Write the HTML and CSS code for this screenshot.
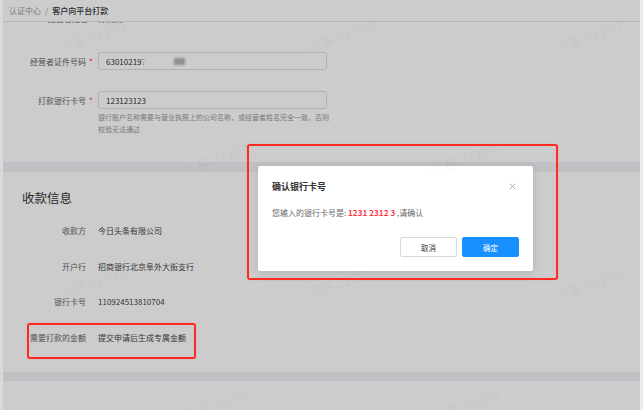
FILE: index.html
```html
<!DOCTYPE html>
<html lang="zh-CN">
<head>
  <meta charset="UTF-8" />
  <meta name="viewport" content="width=device-width, initial-scale=1.0"/>
  <title>客户向平台打款</title>
  <link rel="stylesheet" href="styles.css">
</head>
<body>
  <div class="app">
    <div class="edge edge-left"></div>

    <div class="page">
      <div class="crumb">
        <span class="crumb-link">认证中心</span>
        <span class="crumb-sep">/</span>
        <span class="crumb-current">客户向平台打款</span>
      </div>

      <div class="card form-card">
        <div class="form-row cut">
          <div class="form-label">经营者姓名</div>
          <div class="cut-value">孙某某</div>
        </div>

        <div class="form-row first">
          <div class="form-label">经营者证件号码<span class="req">*</span></div>
          <div class="input">
            <span>630102197</span>
            <span class="blur blur-a"></span>
            <span class="blur blur-b"></span>
          </div>
        </div>

        <div class="form-row">
          <div class="form-label">打款银行卡号<span class="req">*</span></div>
          <div class="input"><span>123123123</span></div>
        </div>
        <p class="hint">银行账户名称需要与营业执照上的公司名称，或经营者姓名完全一致，否则校验无法通过</p>
      </div>

      <div class="band"></div>

      <div class="card pay-card">
        <h2>收款信息</h2>
        <div class="info-list">
          <div class="info-row"><span class="info-label">收款方</span><span class="info-value">今日头条有限公司</span></div>
          <div class="info-row"><span class="info-label">开户行</span><span class="info-value">招商银行北京阜外大街支行</span></div>
          <div class="info-row"><span class="info-label">银行卡号</span><span class="info-value">110924513810704</span></div>
          <div class="info-row"><span class="info-label">需要打款的金额</span><span class="info-value">提交申请后生成专属金额</span></div>
        </div>
      </div>

      <div class="band band-thin"></div>
      <div class="card tail-card"></div>

      <!-- modal layer -->
      <div class="mask"></div>

      <div class="modal">
        <div class="modal-head">
          <span class="modal-title">确认银行卡号</span>
          <svg class="modal-close" viewBox="0 0 8 8" width="7" height="7">
            <path d="M1 1L7 7M7 1L1 7" stroke="#999" stroke-width="0.9" fill="none"/>
          </svg>
        </div>
        <p class="modal-body">您输入的银行卡号是: <b class="card-no">1231 2312 3</b> ,请确认</p>
        <div class="modal-foot">
          <button class="btn">取消</button>
          <button class="btn btn-primary">确定</button>
        </div>
      </div>

      <!-- annotations -->
      <div class="mark mark-modal"></div>
      <div class="mark mark-amount"></div>

      <!-- watermark -->
      <div class="wm" style="left:89px;top:36px">访客 22293</div>
      <div class="wm" style="left:337px;top:35px">访客 22293</div>
      <div class="wm" style="left:585px;top:37px">访客 22293</div>
      <div class="wm" style="left:-36px;top:159px">访客 22293</div>
      <div class="wm" style="left:212px;top:159px">访客 22293</div>
      <div class="wm" style="left:460px;top:159px">访客 22293</div>
      <div class="wm" style="left:89px;top:282px">访客 22293</div>
      <div class="wm" style="left:337px;top:282px">访客 22293</div>
      <div class="wm" style="left:586px;top:285px">访客 22293</div>
      <div class="wm" style="left:-36px;top:405px">访客 22293</div>
      <div class="wm" style="left:214px;top:403px">访客 22293</div>
      <div class="wm" style="left:463px;top:405px">访客 22293</div>
    </div>

    <div class="edge edge-right"></div>
  </div>
</body>
</html>
```

FILE: styles.css
```css
:root {
  --text: #333;
  --label: #666;
  --muted: #999;
  --line: #e3e3e3;
  --band: #f0f2f5;
  --red: #f5222d;
  --blue: #1890ff;
  --mark: #ff2b22;
}

* {
  box-sizing: border-box;
}

body {
  margin: 0;
  font-family: "Noto Sans CJK SC", "Noto Sans", sans-serif;
  color: var(--text);
  background: #fff;
}

.app {
  display: flex;
  width: 643px;
  height: 410px;
  overflow: hidden;
}

.edge-left {
  width: 3px;
  background: #d9d9d9;
}

.edge-right {
  width: 3px;
  background: #ececec;
}

.page {
  position: relative;
  flex: 1;
  display: flex;
  flex-direction: column;
  overflow: hidden;
  background: #fff;
}

/* header */
.crumb {
  position: relative;
  z-index: 1;
  flex: none;
  height: 22px;
  display: flex;
  align-items: center;
  gap: 3px;
  padding: 0 6px 1px;
  font-size: 8px;
  background: #fff;
  border-bottom: 1px solid var(--line);
}

.crumb-link {
  color: var(--muted);
}

.crumb-sep {
  color: var(--muted);
  margin: 0 1px;
}

.crumb-current {
  color: var(--text);
  font-weight: 500;
}

/* form */
.card {
  background: #fff;
}

.form-card {
  flex: none;
  height: 140px;
  overflow: hidden;
}

.form-row {
  display: grid;
  grid-template-columns: 95px 229px;
  align-items: center;
}

.form-row + .form-row {
  margin-top: 21px;
}

.form-row.first {
  margin-top: 29px;
}

.form-row.cut {
  height: 8px;
  margin-top: -7px;
  font-size: 8px;
  line-height: 8px;
}

.cut-value {
  color: var(--label);
}

.form-label {
  display: flex;
  justify-content: flex-end;
  align-items: center;
  padding-right: 5px;
  font-size: 8px;
  color: var(--label);
}

.form-row.cut .form-label {
  padding-right: 10px;
}

.req {
  color: var(--red);
  margin-left: 3px;
  width: 4px;
  font-size: 8px;
  line-height: 8px;
  padding-top: 2px;
}

.input {
  height: 18px;
  display: flex;
  align-items: center;
  padding-left: 7px;
  font-size: 8px;
  color: var(--text);
  border: 1px solid #dedede;
  border-radius: 3px;
  background: #fff;
}

.blur {
  display: inline-block;
  height: 7px;
  filter: blur(1px);
}

.blur-a {
  width: 18px;
  margin-left: -3px;
  background: #fff;
}

.blur-b {
  width: 11px;
  margin-left: 13px;
  background: #b5b5b5;
}

.hint {
  margin: 2px 0 0 95px;
  width: 236px;
  font-size: 7px;
  line-height: 12px;
  color: var(--muted);
}

.band {
  flex: none;
  height: 10px;
  background: var(--band);
}

.band-thin {
  height: 9px;
}

/* payee info */
.pay-card {
  flex: none;
  height: 200px;
  padding: 18px 0 0 19px;
}

.pay-card h2 {
  margin: 0;
  font-size: 12.5px;
  line-height: 16px;
  font-weight: 400;
  color: var(--text);
}

.info-list {
  margin: 7px 0 0 -19px;
}

.info-row {
  display: grid;
  grid-template-columns: 95px 1fr;
  align-items: center;
  height: 35.6px;
  font-size: 8px;
}

.info-label {
  text-align: right;
  padding-right: 12px;
  color: var(--label);
}

.info-value {
  color: #444;
}

.tail-card {
  flex: 1;
}

/* modal */
.mask {
  position: absolute;
  inset: 0;
  z-index: 5;
  background: rgba(0, 0, 0, 0.2);
}

.modal {
  position: absolute;
  z-index: 6;
  left: 255px;
  top: 166px;
  width: 275px;
  height: 105px;
  padding: 0 14px;
  background: #fff;
  border-radius: 2px;
  box-shadow: 0 2px 8px rgba(0, 0, 0, 0.12);
}

.modal-head {
  display: flex;
  justify-content: space-between;
  align-items: center;
  height: 21px;
  margin-top: 10px;
}

.modal-title {
  font-size: 9px;
  font-weight: 700;
  color: var(--text);
}

.modal-close {
  margin-right: 3px;
}

.modal-body {
  margin: 10px 0 0;
  font-size: 8px;
  line-height: 12px;
  color: var(--label);
}

.card-no {
  color: #ff3341;
  font-weight: 700;
  letter-spacing: 0.1px;
}

.modal-foot {
  display: flex;
  justify-content: flex-end;
  gap: 5px;
  margin-top: 18px;
}

.btn {
  width: 57px;
  height: 20px;
  padding: 0;
  font-family: inherit;
  font-size: 7.5px;
  color: var(--text);
  background: #fff;
  border: 1px solid #d9d9d9;
  border-radius: 2px;
}

.btn-primary {
  color: #fff;
  background: var(--blue);
  border-color: var(--blue);
}

/* red annotation boxes */
.mark {
  position: absolute;
  z-index: 7;
  border: 2.5px solid var(--mark);
  border-radius: 3px;
  box-shadow: 0 0 1px rgba(255, 43, 34, 0.6);
}

.mark-modal {
  left: 244px;
  top: 144px;
  width: 311px;
  height: 136px;
}

.mark-amount {
  left: 24px;
  top: 323px;
  width: 169px;
  height: 36px;
}

/* watermark */
.wm {
  position: absolute;
  z-index: 8;
  font-size: 14px;
  white-space: nowrap;
  color: rgba(0, 0, 0, 0.04);
  transform: translate(-50%, -50%) rotate(-18deg);
  pointer-events: none;
}
```
